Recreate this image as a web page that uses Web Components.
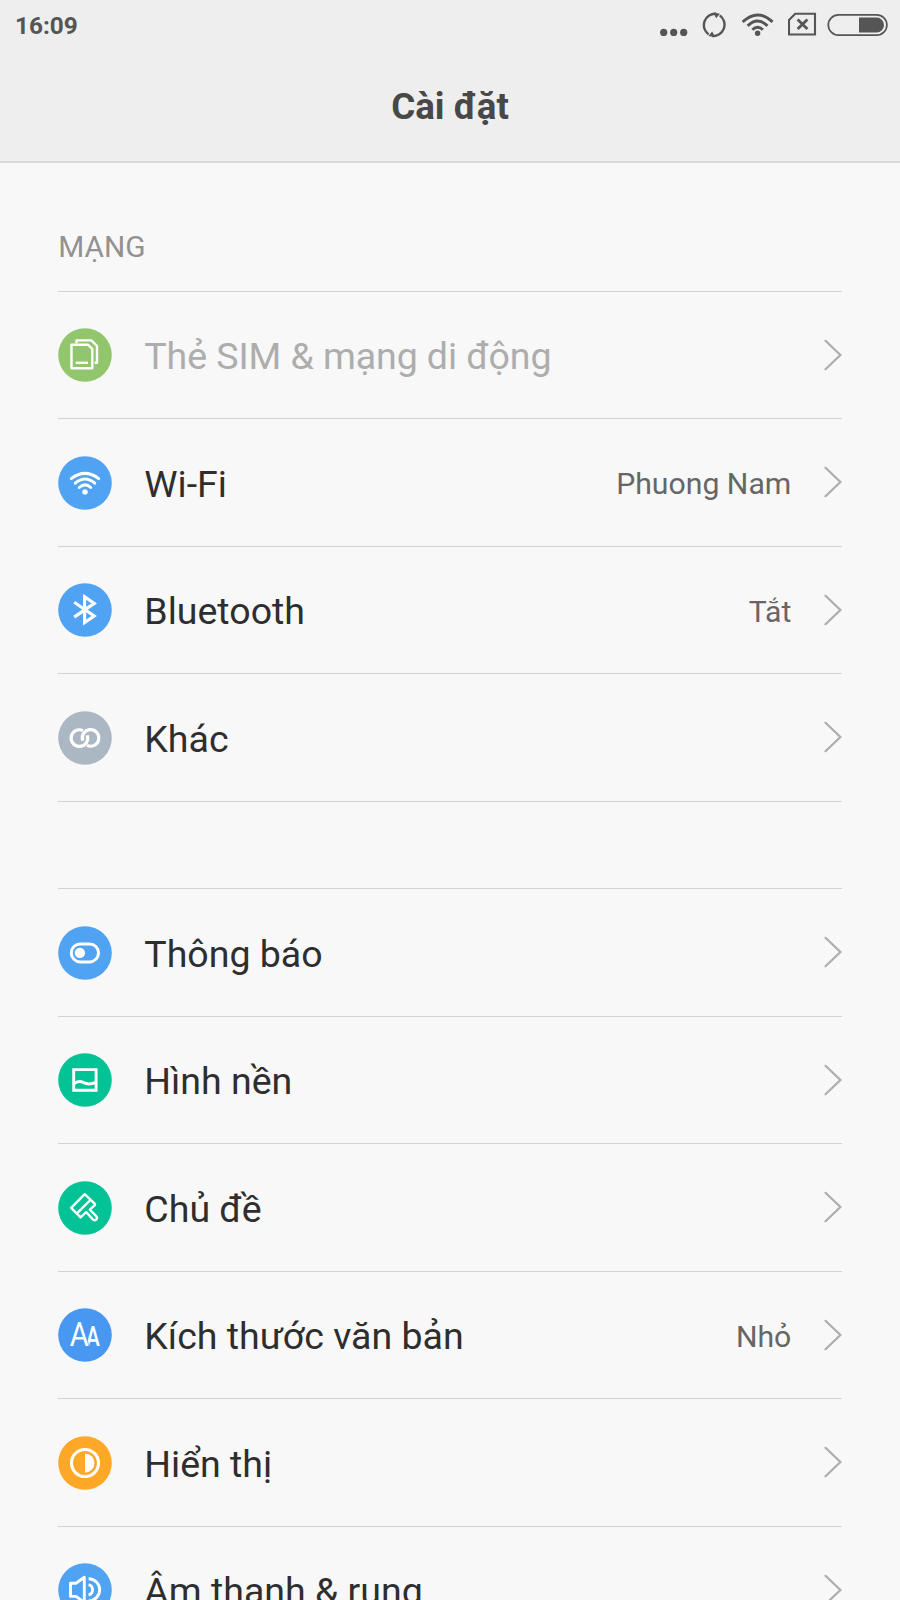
<!DOCTYPE html>
<html lang="vi">
<head>
<meta charset="utf-8">
<title>Cài đặt</title>
<style>
  html, body { margin: 0; height: 1600px; overflow: hidden; }
  body { background: #f8f8f8; font-family: Roboto, "Noto Sans", sans-serif; color: #2e2e2e; }
</style>
</head>
<body>
<settings-page>
  <status-bar slot="status">16:09</status-bar>
  <title-bar slot="title">Cài đặt</title-bar>
  <settings-group>
    <span slot="heading">MẠNG</span>
    <settings-row icon="sim" color="#91c66c" disabled>Thẻ SIM &amp; mạng di động</settings-row>
    <settings-row icon="wifi" color="#50a3f2">Wi-Fi<span slot="value">Phuong Nam</span></settings-row>
    <settings-row icon="bluetooth" color="#50a3f2">Bluetooth<span slot="value">Tắt</span></settings-row>
    <settings-row icon="link" color="#abb8c3">Khác</settings-row>
  </settings-group>
  <settings-group>
    <settings-row icon="toggle" color="#50a3f2">Thông báo</settings-row>
    <settings-row icon="wallpaper" color="#03c295">Hình nền</settings-row>
    <settings-row icon="brush" color="#03c295">Chủ đề</settings-row>
    <settings-row icon="font" color="#4898f2">Kích thước văn bản<span slot="value">Nhỏ</span></settings-row>
    <settings-row icon="display" color="#ffa828">Hiển thị</settings-row>
    <settings-row icon="sound" color="#50a3f2">Âm thanh &amp; rung</settings-row>
  </settings-group>
</settings-page>

<script>
/* Row glyphs, drawn on the 54px disc */
const ICONS = {
  sim: `
    <g stroke-width="2.4">
      <path d="M13.5 16.8H30.2L34.3 20.8V40.2H13.5Z"/>
      <path d="M18.5 15.2V12.4H33.4L39 18V34.8H36.6"/>
      <path d="M17.7 34.8H30"/>
    </g>`,
  wifi: `
    <g stroke-width="3" stroke-linecap="round">
      <path d="M13.3 22.6Q27 12.2 40.7 22.6"/>
      <path d="M17.3 27.2Q27 18.8 36.7 27.2"/>
      <path d="M21.3 31.5Q27 26.2 32.7 31.5"/>
    </g>
    <circle cx="27" cy="35.9" r="2.7" fill="#fff" stroke="none"/>`,
  bluetooth: `<path stroke-width="3.1" stroke-linejoin="miter" d="M16.2 19.2L36.2 32.9L26.6 39.6V13.8L36.2 20.4L16.2 34.1"/>`,
  link: `
    <g stroke-width="3.2">
      <path d="M25 19.6A8.3 8.3 0 1 0 29.2 24.2"/>
      <path d="M29 34.4A8.3 8.3 0 1 0 24.8 29.8"/>
    </g>`,
  toggle: `
    <rect x="13.3" y="17.9" width="27.2" height="18" rx="9" stroke-width="3"/>
    <circle cx="21.9" cy="26.9" r="5.2" fill="#fff" stroke="none"/>`,
  wallpaper: `
    <path stroke-width="2.9" stroke-linejoin="miter" d="M15.7 16.6H38.1V37.2H15.7Z"/>
    <path stroke-width="2.9" d="M16 30.6Q20.5 26.8 25.5 29.6T37.8 29.4"/>`,
  brush: `
    <g stroke-width="2.4">
      <path d="M26.7 13.2L13.2 26.8L22.6 36.4L28.2 31L34.8 38.4Q36.6 40 38.2 38.6Q39.8 37 38.2 35.2L31.8 28.6L36.8 24.2Q37.4 23.4 36.6 22.6Z"/>
      <path d="M19.2 32.2L32.4 19"/>
    </g>`,
  font: `
    <g fill="#fff" stroke="var(--disc)" stroke-width="1.6" paint-order="stroke" font-family="Roboto, sans-serif">
      <text x="28" y="38.3" font-size="27" font-weight="500" textLength="13.8" lengthAdjust="spacingAndGlyphs">A</text>
      <text x="11.8" y="38.3" font-size="33" textLength="19" lengthAdjust="spacingAndGlyphs">A</text>
    </g>`,
  display: `
    <circle cx="27" cy="27" r="13.5" stroke-width="3.1"/>
    <path d="M27 17.5A9.5 9.5 0 0 1 27 36.5Z" fill="#fff" stroke="none"/>`,
  sound: `
    <g stroke-width="2.9">
      <path d="M12.5 20.2H18L26.3 14.2V39.4L18 33.4H12.5Z"/>
      <path d="M30.6 15.7A11.1 11.1 0 0 1 30.6 37.9"/>
      <path d="M30.6 21.6A5.4 5.4 0 0 1 30.6 32"/>
    </g>`,
};

/* ─────────────────────────────────────────────
   <settings-page>
───────────────────────────────────────────── */
class SettingsPage extends HTMLElement {
  connectedCallback() {
    this.attachShadow({ mode: "open" }).innerHTML = `
      <style>
        :host { display: block; width: 900px; height: 1600px; overflow: hidden; }
        header {
          box-sizing: border-box; height: 163px;
          background: #eeeeee; border-bottom: 2px solid #d9d9d9;
        }
        main { padding: 0 58.33px; }
      </style>
      <header><slot name="status"></slot><slot name="title"></slot></header>
      <main><slot></slot></main>
    `;
  }
}
customElements.define("settings-page", SettingsPage);

/* ─────────────────────────────────────────────
   <status-bar>
───────────────────────────────────────────── */
class StatusBar extends HTMLElement {
  connectedCallback() {
    this.attachShadow({ mode: "open" }).innerHTML = `
      <style>
        :host {
          display: flex; justify-content: space-between;
          height: 50px; padding: 0 12px 0 15px;
          font-size: 24.4px; font-weight: 700; line-height: 52px; color: #555;
        }
        .icons { display: flex; }
        svg { display: block; height: 50px; fill: none; stroke: #555; }
        .solid { fill: #555; stroke: none; }
      </style>
      <time><slot></slot></time>
      <div class="icons">
        <svg width="42" viewBox="0 0 42 50">
          <g class="solid">
            <circle cx="3.7" cy="32.4" r="3.6"/><circle cx="13.7" cy="32.4" r="3.6"/><circle cx="23.7" cy="32.4" r="3.6"/>
          </g>
        </svg>
        <svg width="40" viewBox="0 0 40 50">
          <path stroke-width="2.4" d="M6.6 34.4A11.4 11.4 0 0 1 14.2 13.8M17.8 15.4A11.4 11.4 0 0 1 10.2 36"/>
          <path class="solid" d="M11.2 12.5L18 13.7L14.2 18.2Z M13.2 37.3L6.4 36.1L10.2 31.6Z"/>
        </svg>
        <svg width="46" viewBox="0 0 46 50">
          <g stroke-width="2.9">
            <path d="M.6 21.9Q15.6 7.9 30.6 21.9"/>
            <path d="M5.7 25.9Q15.6 16.2 25.5 25.9"/>
            <path d="M10.3 29.8Q15.6 24.8 20.9 29.8"/>
          </g>
          <circle class="solid" cx="15.6" cy="33.3" r="2.7"/>
        </svg>
        <svg width="39" viewBox="0 0 39 50">
          <path stroke-width="2.1" d="M7.2 13.7H27V34.5H1V20Z"/>
          <path stroke-width="2.8" d="M9.6 19.4L19.4 28.9M19.4 19.4L9.6 28.9"/>
        </svg>
        <svg width="61" viewBox="0 0 61 50">
          <rect x="1.3" y="14.8" width="58.6" height="20.4" rx="10.2" stroke-width="1.7"/>
          <path class="solid" d="M32 17.6H49.6A7.4 7.4 0 0 1 49.6 32.4H32Z"/>
        </svg>
      </div>
    `;
  }
}
customElements.define("status-bar", StatusBar);

/* ─────────────────────────────────────────────
   <title-bar>
───────────────────────────────────────────── */
class TitleBar extends HTMLElement {
  connectedCallback() {
    this.attachShadow({ mode: "open" }).innerHTML = `
      <style>
        :host { display: block; text-align: center; }
        h1 { margin: 0; font-size: 36.7px; font-weight: 700; line-height: 113px; color: #484848; }
      </style>
      <h1><slot></slot></h1>
    `;
  }
}
customElements.define("title-bar", TitleBar);

/* ─────────────────────────────────────────────
   <settings-group>
───────────────────────────────────────────── */
class SettingsGroup extends HTMLElement {
  connectedCallback() {
    const hasHeading = this.querySelector('[slot="heading"]');
    this.attachShadow({ mode: "open" }).innerHTML = `
      <style>
        :host { display: block; }
        .head { height: ${hasHeading ? 127.6 : 86.6}px; }
        .head div { padding-top: 65.5px; font-size: 29.8px; line-height: 36px; color: #929292; }
        .rows { border-bottom: 1px solid #d2d2d2; }
      </style>
      <div class="head">${hasHeading ? '<div><slot name="heading"></slot></div>' : ""}</div>
      <div class="rows"><slot></slot></div>
    `;
  }
}
customElements.define("settings-group", SettingsGroup);

/* ─────────────────────────────────────────────
   <settings-row>
───────────────────────────────────────────── */
class SettingsRow extends HTMLElement {
  connectedCallback() {
    const color = this.getAttribute("color");
    this.attachShadow({ mode: "open" }).innerHTML = `
      <style>
        :host {
          display: flex; align-items: center; box-sizing: border-box;
          height: 127.5px; border-top: 1px solid #d2d2d2;
          --disc: ${color};
        }
        .icon {
          flex: none; width: 54px; height: 54px; margin-top: .8px;
          fill: none; stroke: #fff; stroke-linejoin: round;
        }
        .icon .disc { fill: var(--disc); stroke: none; }
        .label { flex: 1; margin-left: 32px; padding-top: 2.4px; font-size: 37.5px; line-height: 48px; white-space: nowrap; }
        :host([disabled]) .label { color: #adadad; letter-spacing: -.08px; }
        .value { padding-top: 3.4px; font-size: 30.2px; line-height: 36px; color: #666; }
        .arrow { flex: none; margin-left: 32.4px; fill: none; stroke: #adadad; stroke-width: 2.2; stroke-linecap: round; }
      </style>
      <svg class="icon" viewBox="0 0 54 54">
        <circle class="disc" cx="27" cy="27" r="26.8"/>
        ${ICONS[this.getAttribute("icon")]}
      </svg>
      <div class="label"><slot></slot></div>
      <div class="value"><slot name="value"></slot></div>
      <svg class="arrow" width="18" height="32" viewBox="0 0 18 32"><path d="M1.5 1.8L16.4 16L1.5 30.2"/></svg>
    `;
  }
}
customElements.define("settings-row", SettingsRow);
</script>
</body>
</html>
